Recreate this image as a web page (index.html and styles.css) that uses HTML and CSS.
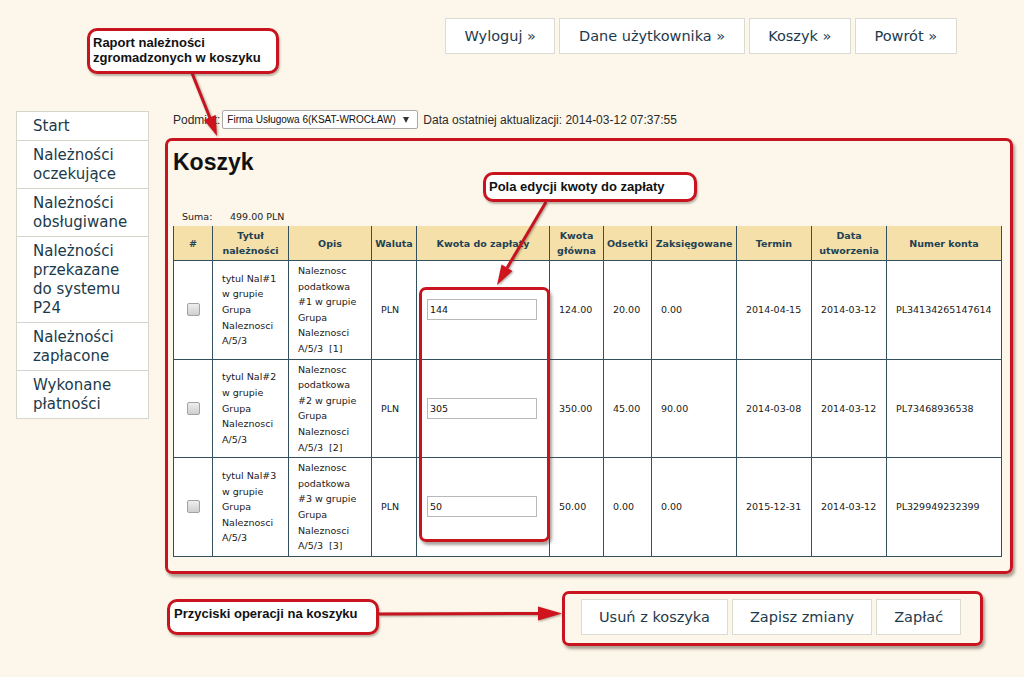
FILE: index.html
```html
<!DOCTYPE html>
<html lang="pl">
<head>
<meta charset="utf-8">
<title>Koszyk</title>
<link rel="stylesheet" href="styles.css">
</head>
<body>
<div class="page">
  <nav class="topnav">
    <a class="btn" href="#">Wyloguj »</a>
    <a class="btn" href="#">Dane użytkownika »</a>
    <a class="btn" href="#">Koszyk »</a>
    <a class="btn" href="#">Powrót »</a>
  </nav>

  <div class="layout">
    <ul class="sidebar">
      <li>Start</li>
      <li>Należności oczekujące</li>
      <li>Należności obsługiwane</li>
      <li>Należności przekazane do systemu P24</li>
      <li>Należności zapłacone</li>
      <li>Wykonane płatności</li>
    </ul>

    <main class="content">
      <div class="subject">
        <span>Podmiot:</span>
        <div class="select"><span>Firma Usługowa 6(KSAT-WROCŁAW)</span><span class="caret"></span></div>
        <span>Data ostatniej aktualizacji: 2014-03-12 07:37:55</span>
      </div>

      <h1>Koszyk</h1>

      <div class="sum"><span class="sum-label">Suma:</span><span>499.00 PLN</span></div>

      <table class="cart">
        <colgroup>
          <col class="c-check"><col class="c-title"><col class="c-desc"><col class="c-cur"><col class="c-amount"><col class="c-main"><col class="c-int"><col class="c-booked"><col class="c-due"><col class="c-created"><col class="c-acc">
        </colgroup>
        <thead>
          <tr>
            <th>#</th>
            <th>Tytuł należności</th>
            <th>Opis</th>
            <th>Waluta</th>
            <th>Kwota do zapłaty</th>
            <th>Kwota główna</th>
            <th>Odsetki</th>
            <th>Zaksięgowane</th>
            <th>Termin</th>
            <th>Data utworzenia</th>
            <th>Numer konta</th>
          </tr>
        </thead>
        <tbody>
          <tr>
            <td class="cell-check"><input class="check" type="checkbox"></td>
            <td>tytul Nal#1 w grupie Grupa Naleznosci A/5/3</td>
            <td>Naleznosc podatkowa #1 w grupie Grupa Naleznosci A/5/3&nbsp; [1]</td>
            <td>PLN</td>
            <td class="cell-amount"><input class="amount" type="text" value="144"></td>
            <td>124.00</td>
            <td>20.00</td>
            <td>0.00</td>
            <td>2014-04-15</td>
            <td>2014-03-12</td>
            <td>PL34134265147614</td>
          </tr>
          <tr>
            <td class="cell-check"><input class="check" type="checkbox"></td>
            <td>tytul Nal#2 w grupie Grupa Naleznosci A/5/3</td>
            <td>Naleznosc podatkowa #2 w grupie Grupa Naleznosci A/5/3&nbsp; [2]</td>
            <td>PLN</td>
            <td class="cell-amount"><input class="amount" type="text" value="305"></td>
            <td>350.00</td>
            <td>45.00</td>
            <td>90.00</td>
            <td>2014-03-08</td>
            <td>2014-03-12</td>
            <td>PL73468936538</td>
          </tr>
          <tr>
            <td class="cell-check"><input class="check" type="checkbox"></td>
            <td>tytul Nal#3 w grupie Grupa Naleznosci A/5/3</td>
            <td>Naleznosc podatkowa #3 w grupie Grupa Naleznosci A/5/3&nbsp; [3]</td>
            <td>PLN</td>
            <td class="cell-amount"><input class="amount" type="text" value="50"></td>
            <td>50.00</td>
            <td>0.00</td>
            <td>0.00</td>
            <td>2015-12-31</td>
            <td>2014-03-12</td>
            <td>PL329949232399</td>
          </tr>
        </tbody>
      </table>

      <div class="actions">
        <a class="btn btn-action" href="#">Usuń z koszyka</a>
        <a class="btn btn-action" href="#">Zapisz zmiany</a>
        <a class="btn btn-action" href="#">Zapłać</a>
      </div>
    </main>
  </div>

  <!-- annotation overlay -->
  <div class="mark mark-table"></div>
  <div class="mark mark-inputs"></div>
  <div class="mark mark-actions"></div>

  <svg class="arrows" width="1024" height="677" viewBox="0 0 1024 677">
    <g class="arrow">
      <line x1="192" y1="73" x2="210" y2="118"/>
      <polygon points="217,136 204,120 215.5,115"/>
    </g>
    <g class="arrow">
      <line x1="546" y1="202" x2="507" y2="268"/>
      <polygon points="497,285 501.5,264.5 512.5,271"/>
    </g>
    <g class="arrow">
      <line x1="379" y1="614" x2="542" y2="613.5"/>
      <polygon points="562,613.5 538,606.5 538,620.5"/>
    </g>
  </svg>

  <div class="callout callout-report">Raport należności<br>zgromadzonych w koszyku</div>
  <div class="callout callout-fields">Pola edycji kwoty do zapłaty</div>
  <div class="callout callout-actions">Przyciski operacji na koszyku</div>
</div>
</body>
</html>
```

FILE: styles.css
```css
html, body {
  margin: 0;
  padding: 0;
}

body {
  background: #fcf7ea;
  font-family: "DejaVu Sans", Verdana, sans-serif;
  color: #1d3a4c;
}

.page {
  position: relative;
  width: 1024px;
  height: 677px;
  overflow: hidden;
}

/* top navigation */
.topnav {
  display: flex;
  gap: 4px;
  padding: 18px 0 0 445px;
}

.btn {
  display: block;
  height: 36px;
  box-sizing: border-box;
  border: 1px solid #dcdbd2;
  background: #fff;
  padding: 0 18.5px;
  line-height: 34px;
  font-size: 14.5px;
  color: #1d3a4c;
  text-decoration: none;
  white-space: nowrap;
}

/* main layout */
.layout {
  display: flex;
  align-items: flex-start;
  padding: 56px 0 0 16px;
}

.sidebar {
  list-style: none;
  margin: 1px 0 0;
  padding: 0;
  width: 133px;
  box-sizing: border-box;
  border: 1px solid #d6d5cc;
  background: #fff;
}

.sidebar li {
  padding: 5px 9px 4px 16px;
  line-height: 19px;
  font-size: 15px;
  color: #1b3a4a;
  border-top: 1px solid #d6d5cc;
}

.sidebar li:first-child {
  border-top: none;
}

.content {
  margin-left: 24px;
  width: 828px;
}

.subject {
  display: flex;
  align-items: center;
  height: 19px;
  font-family: "Liberation Sans", Arial, sans-serif;
  font-size: 12px;
  color: #2a2a2a;
}

.select {
  display: flex;
  align-items: center;
  justify-content: space-between;
  width: 196px;
  height: 19px;
  box-sizing: border-box;
  margin: 0 5px 0 2px;
  padding: 0 8px 0 4px;
  border: 1px solid #a9a9a9;
  border-radius: 2px;
  background: #fff;
  font-size: 10px;
  color: #111;
}

.caret {
  width: 0;
  height: 0;
  border-left: 3.5px solid transparent;
  border-right: 3.5px solid transparent;
  border-top: 6px solid #333;
}

h1 {
  margin: 20px 0 0;
  font: bold 23px/26px "Liberation Sans", Arial, sans-serif;
  color: #111;
}

.sum {
  display: flex;
  margin-top: 35px;
  height: 13px;
  line-height: 13px;
  padding-left: 9px;
  font-size: 9.5px;
  color: #222;
}

.sum-label {
  width: 48px;
}

/* table */
.cart {
  margin-top: 3px;
  width: 828px;
  border-collapse: collapse;
  table-layout: fixed;
  font-size: 9.5px;
}

.c-check { width: 39px; }
.c-title { width: 76px; }
.c-desc { width: 83px; }
.c-cur { width: 45px; }
.c-amount { width: 133px; }
.c-main { width: 54px; }
.c-int { width: 48px; }
.c-booked { width: 85px; }
.c-due { width: 75px; }
.c-created { width: 75px; }
.c-acc { width: 115px; }

.cart th {
  background: #f5e0a9;
  color: #1f4254;
  font-weight: bold;
  line-height: 15px;
  padding: 2px 1px;
  text-align: center;
  border-left: 1px solid #34505e;
  border-right: 1px solid #34505e;
  border-bottom: 1px solid #34505e;
}

.cart td {
  background: #fff;
  line-height: 15.6px;
  padding: 2px 9px;
  border: 1px solid #34505e;
  color: #1a1a1a;
  vertical-align: middle;
  text-align: left;
}

.cart td.cell-check {
  padding: 0;
  text-align: center;
}

.check {
  appearance: none;
  -webkit-appearance: none;
  display: block;
  margin: 0 auto;
  width: 13px;
  height: 13px;
  box-sizing: border-box;
  border: 1px solid #a2a2a2;
  border-radius: 2px;
  background: linear-gradient(#eeeeee, #cfcfcf);
}

.cart td.cell-amount {
  padding: 0 10px;
}

.amount {
  display: block;
  width: 110px;
  height: 21px;
  box-sizing: border-box;
  margin: 0;
  border: 1px solid #b8b8b8;
  padding: 0 2px;
  font: 9.5px "DejaVu Sans", Verdana, sans-serif;
  color: #111;
  background: #fff;
}

/* bottom buttons */
.actions {
  display: flex;
  gap: 4px;
  margin: 42px 0 0 408px;
}

.btn-action {
  padding: 0 17px;
}

/* annotation overlays */
.mark {
  position: absolute;
  box-sizing: border-box;
  border: 3px solid #c8141e;
  border-radius: 7px;
  box-shadow: 2px 3px 3px rgba(70, 50, 40, 0.45);
}

.mark-table {
  left: 165px;
  top: 138px;
  width: 848px;
  height: 436px;
}

.mark-inputs {
  left: 419px;
  top: 287px;
  width: 131px;
  height: 255px;
}

.mark-actions {
  left: 562px;
  top: 591px;
  width: 421px;
  height: 55px;
}

.arrows {
  position: absolute;
  left: 0;
  top: 0;
  pointer-events: none;
}

.arrow line {
  stroke: #c8141e;
  stroke-width: 3;
}

.arrow polygon {
  fill: #d0141e;
}

.arrow {
  filter: drop-shadow(1px 1px 1px rgba(60, 40, 30, 0.45));
}

.callout {
  position: absolute;
  box-sizing: border-box;
  background: #fff;
  border: 3px solid #c8141e;
  border-radius: 10px;
  box-shadow: 1px 2px 2px rgba(70, 50, 40, 0.35);
  font: bold 13px/15px "Liberation Sans", Arial, sans-serif;
  color: #111;
  white-space: nowrap;
}

.callout-report {
  left: 87px;
  top: 28px;
  width: 192px;
  height: 46px;
  padding: 4px 0 0 3px;
}

.callout-fields {
  left: 483px;
  top: 172px;
  width: 214px;
  height: 30px;
  padding: 4px 0 0 3px;
}

.callout-actions {
  left: 167px;
  top: 599px;
  width: 212px;
  height: 36px;
  padding: 4px 0 0 4px;
}
```
